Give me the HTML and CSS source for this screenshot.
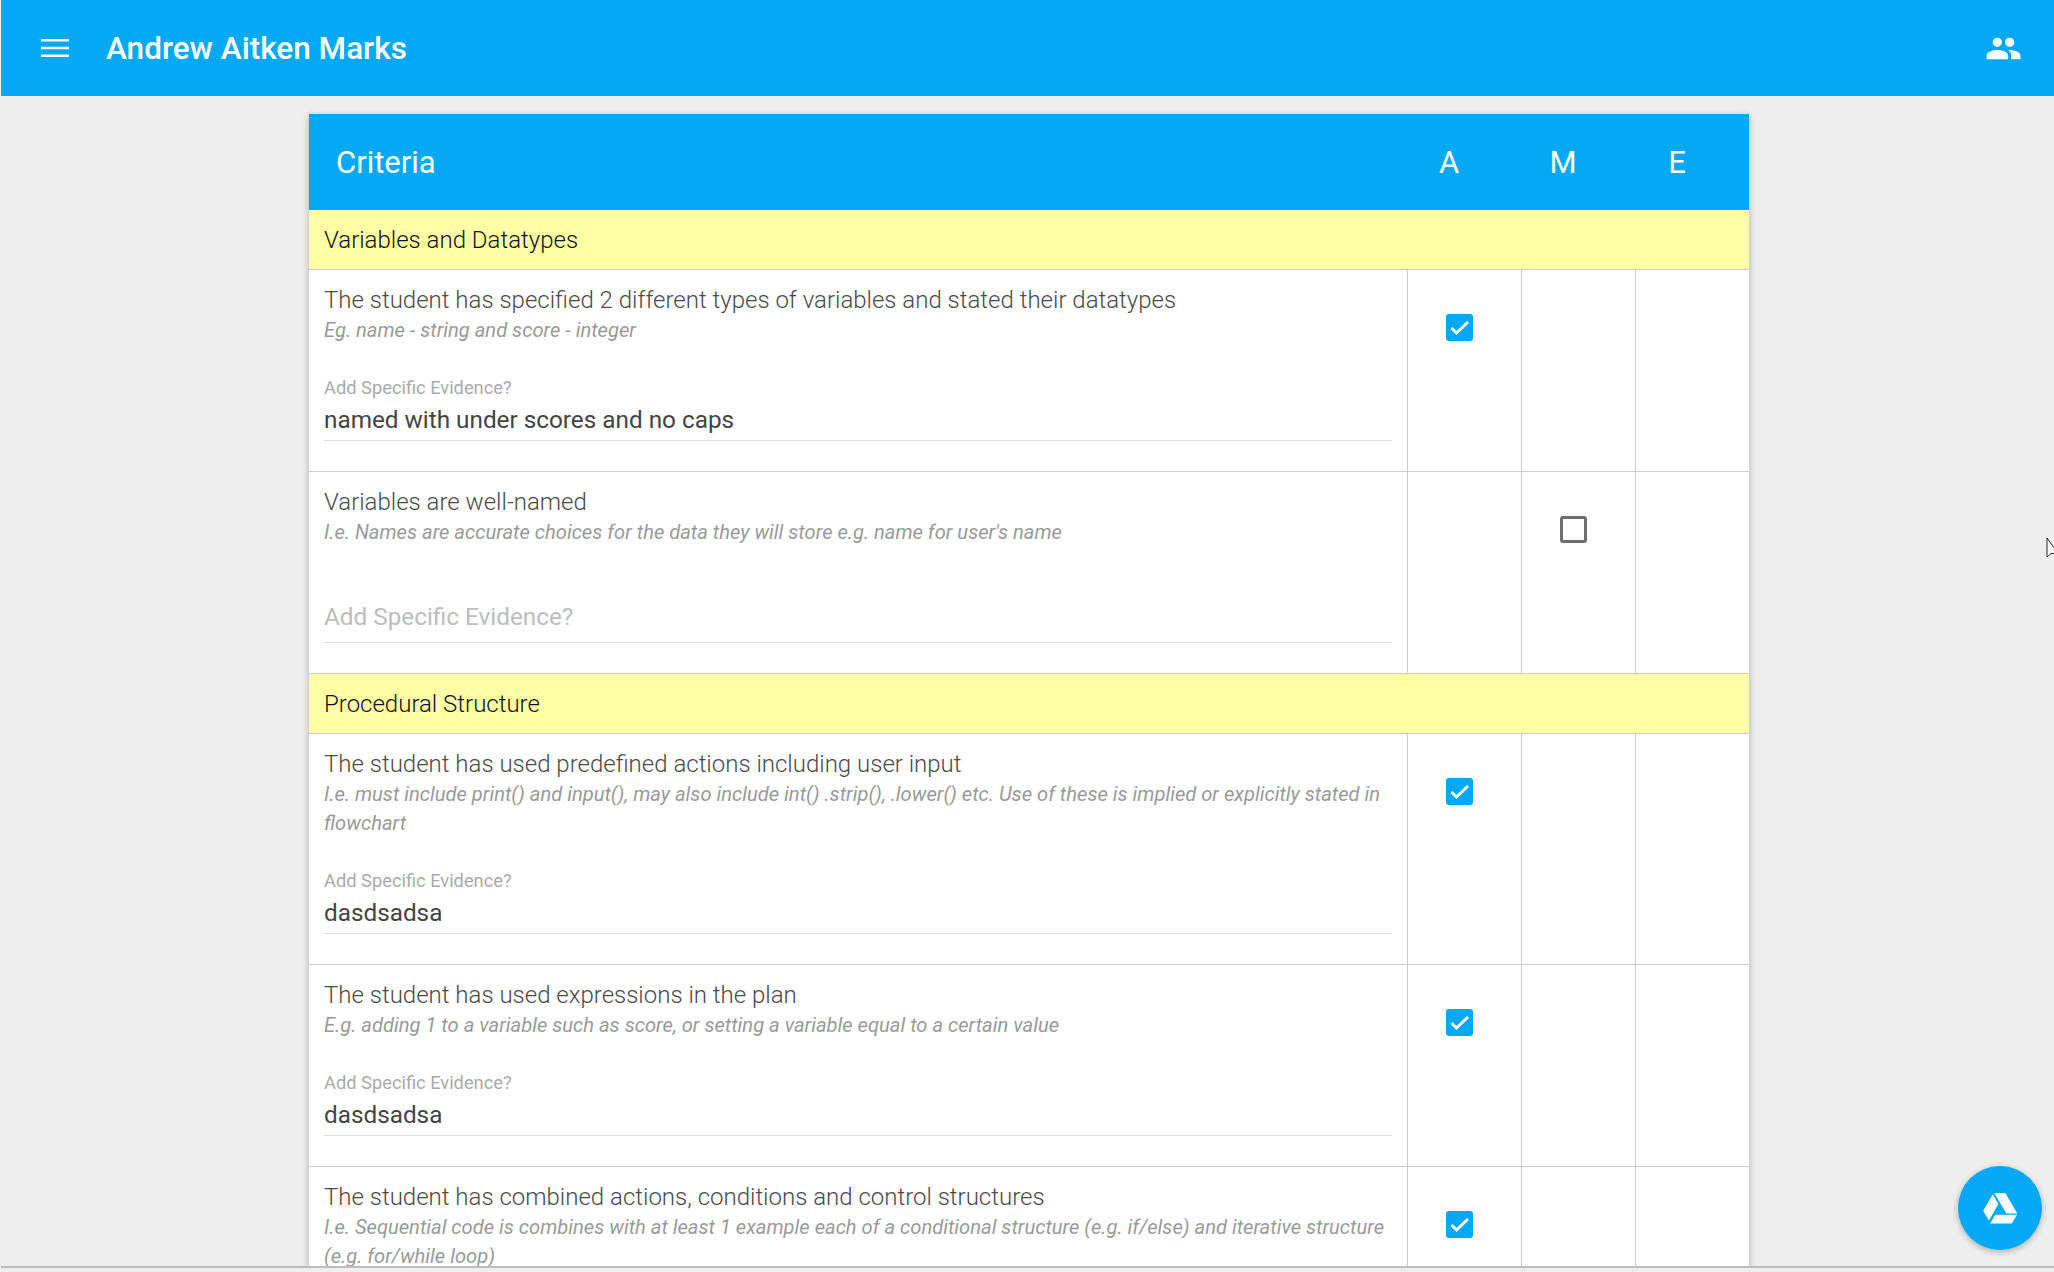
FILE: index.html
```html
<!DOCTYPE html>
<html lang="en">
<head>
<meta charset="utf-8">
<title>Andrew Aitken Marks</title>
<link rel="stylesheet" href="styles.css">
</head>
<body>
<div class="app">
  <header class="topbar">
    <svg class="menu-icon" viewBox="0 0 28 18" aria-hidden="true"><path d="M0 1.300h28M0 9h28M0 16.700h28" fill="none" stroke="#fff" stroke-width="2.600"/></svg>
    <h1 class="topbar-title">Andrew Aitken Marks</h1>
    <svg class="people-icon" viewBox="0 0 24 24" aria-hidden="true"><path fill="#fff" d="M16 11c1.660 0 2.990-1.340 2.990-3S17.660 5 16 5s-3 1.340-3 3 1.340 3 3 3zm-8 0c1.660 0 2.990-1.340 2.990-3S9.660 5 8 5 5 6.340 5 8s1.340 3 3 3zm0 2c-2.330 0-7 1.170-7 3.500V19h14v-2.500c0-2.330-4.670-3.500-7-3.500zm8 0c-.290 0-.620.020-.970.050 1.160.840 1.970 1.970 1.970 3.450V19h6v-2.500c0-2.330-4.670-3.500-7-3.500z"/></svg>
  </header>
  <main class="content">
    <section class="card">
      <div class="card-head">
        <div class="head-title">Criteria</div>
        <div class="head-col">A</div>
        <div class="head-col">M</div>
        <div class="head-col">E</div>
      </div>

      <div class="section">Variables and Datatypes</div>

      <div class="row">
        <div class="main-cell">
          <div class="crit">The student has specified 2 different types of variables and stated their datatypes</div>
          <div class="hint">Eg. name - string and score - integer</div>
          <div class="field">
            <div class="label">Add Specific Evidence?</div>
            <div class="value">named with under scores and no caps</div>
          </div>
        </div>
        <div class="cell"><span class="box checked"><svg viewBox="0 0 27 27"><path d="M5.500 14l5 5L22 8" fill="none" stroke="#fff" stroke-width="3"/></svg></span></div>
        <div class="cell"></div>
        <div class="cell"></div>
      </div>

      <div class="row">
        <div class="main-cell">
          <div class="crit">Variables are well-named</div>
          <div class="hint">I.e. Names are accurate choices for the data they will store e.g. name for user's name</div>
          <div class="field">
            <div class="label-spacer"></div>
            <div class="value placeholder">Add Specific Evidence?</div>
          </div>
        </div>
        <div class="cell"></div>
        <div class="cell"><span class="box"></span></div>
        <div class="cell"></div>
      </div>

      <div class="section">Procedural Structure</div>

      <div class="row">
        <div class="main-cell">
          <div class="crit">The student has used predefined actions including user input</div>
          <div class="hint">I.e. must include print() and input(), may also include int() .strip(), .lower() etc. Use of these is implied or explicitly stated in flowchart</div>
          <div class="field">
            <div class="label">Add Specific Evidence?</div>
            <div class="value">dasdsadsa</div>
          </div>
        </div>
        <div class="cell"><span class="box checked"><svg viewBox="0 0 27 27"><path d="M5.500 14l5 5L22 8" fill="none" stroke="#fff" stroke-width="3"/></svg></span></div>
        <div class="cell"></div>
        <div class="cell"></div>
      </div>

      <div class="row">
        <div class="main-cell">
          <div class="crit">The student has used expressions in the plan</div>
          <div class="hint">E.g. adding 1 to a variable such as score, or setting a variable equal to a certain value</div>
          <div class="field">
            <div class="label">Add Specific Evidence?</div>
            <div class="value">dasdsadsa</div>
          </div>
        </div>
        <div class="cell"><span class="box checked"><svg viewBox="0 0 27 27"><path d="M5.500 14l5 5L22 8" fill="none" stroke="#fff" stroke-width="3"/></svg></span></div>
        <div class="cell"></div>
        <div class="cell"></div>
      </div>

      <div class="row">
        <div class="main-cell">
          <div class="crit">The student has combined actions, conditions and control structures</div>
          <div class="hint">I.e. Sequential code is combines with at least 1 example each of a conditional structure (e.g. if/else) and iterative structure (e.g. for/while loop)</div>
          <div class="field"></div>
        </div>
        <div class="cell"><span class="box checked"><svg viewBox="0 0 27 27"><path d="M5.500 14l5 5L22 8" fill="none" stroke="#fff" stroke-width="3"/></svg></span></div>
        <div class="cell"></div>
        <div class="cell"></div>
      </div>
    </section>
  </main>
</div>
<button class="fab" aria-label="Google Drive">
  <svg viewBox="0 0 36 32" aria-hidden="true"><path fill="#fff" d="M12.300 1h11l12 20.500h-11zM10.800 2.200l5.500 9.800L7 28.500 1.200 18.800zM13.200 22.800H35l-5.300 8.700H8.200z"/></svg>
</button>
<svg class="cursor" viewBox="0 0 12 25" aria-hidden="true"><path d="M1 1v19l4-3.500H12L1 1z" fill="#fff" stroke="#222" stroke-width="1"/></svg>
</body>
</html>
```

FILE: styles.css
```css
html, body {
  margin: 0;
  height: 100%;
  overflow: hidden;
  background: #eeeeee;
  font-family: Roboto, "Noto Sans", sans-serif;
}

.app {
  height: 1266px;
  margin-left: 1px;
  display: flex;
  flex-direction: column;
  overflow: hidden;
  border-bottom: 2px solid #bdbdbd;
  background: #eeeeee;
}

.topbar {
  flex: none;
  height: 96px;
  display: flex;
  align-items: center;
  padding: 0 32px 0 40px;
  background: #03a9f4;
  color: #fff;
}

.menu-icon {
  width: 28px;
  height: 18px;
  flex: none;
}

.topbar-title {
  margin: 2px 0 0 37px;
  flex: 1;
  font-size: 31.500px;
  font-weight: 500;
  line-height: 36px;
}

.people-icon {
  width: 37px;
  height: 37px;
  flex: none;
}

.content {
  flex: 1;
  min-height: 0;
  padding-top: 18px;
  display: flex;
  justify-content: center;
}

.card {
  width: 1440px;
  margin-left: 3px;
  height: fit-content;
  background: #fff;
  box-shadow: 0 2px 5px rgba(0, 0, 0, 0.16), 0 2px 10px rgba(0, 0, 0, 0.12);
}

.card-head {
  height: 96px;
  display: flex;
  align-items: center;
  background: #03a9f4;
  color: #fff;
  font-size: 31px;
}

.head-title {
  flex: 1;
  padding-left: 27px;
}

.head-col {
  width: 114px;
  padding-right: 30px;
  box-sizing: border-box;
  text-align: center;
}

.section {
  height: 59px;
  display: flex;
  align-items: center;
  padding-left: 15px;
  background: #ffffa5;
  border-bottom: 1px solid #cccccc;
  font-size: 24px;
  font-weight: 300;
  color: #111;
}

.row {
  display: flex;
  border-bottom: 1px solid #cccccc;
}

.main-cell {
  flex: 1;
  min-width: 0;
  padding: 15px 15px 0;
}

.cell {
  flex: none;
  border-left: 1px solid #cccccc;
  padding: 44px 0 0 38px;
  box-sizing: border-box;
  width: 114px;
}

.crit {
  font-size: 24px;
  line-height: 31px;
  font-weight: 300;
  color: #4a4a4a;
}

.hint {
  font-size: 20.150px;
  line-height: 29px;
  font-style: italic;
  font-weight: 400;
  color: #9a9a9a;
}

.field {
  margin-top: 31px;
  margin-bottom: 30px;
  border-bottom: 1px solid #dddddd;
  height: 64px;
}

.label {
  font-size: 18.300px;
  line-height: 24px;
  font-weight: 400;
  color: #aaaaaa;
}

.label-spacer {
  height: 19px;
}

.value {
  margin-top: 3px;
  font-size: 24.300px;
  line-height: 34px;
  color: #444;
}

.placeholder {
  color: #bdbdbd;
  font-weight: 400;
  font-size: 24.300px;
}

.box {
  display: block;
  width: 27px;
  height: 27px;
  box-sizing: border-box;
  border: 3px solid #6f6f6f;
  border-radius: 3px;
}

.box.checked {
  border: 0;
  background: #03a9f4;
}

.box svg {
  display: block;
  width: 27px;
  height: 27px;
}

.fab {
  position: fixed;
  left: 1958px;
  top: 1166px;
  width: 84px;
  height: 84px;
  padding: 0;
  border: 0;
  border-radius: 50%;
  background: #03a9f4;
  box-shadow: 0 2px 6px rgba(0, 0, 0, 0.28);
  display: flex;
  align-items: center;
  justify-content: center;
}

.fab svg {
  width: 36px;
  height: 32px;
}

.cursor {
  position: fixed;
  left: 2046px;
  top: 537px;
  width: 12px;
  height: 25px;
}
```
